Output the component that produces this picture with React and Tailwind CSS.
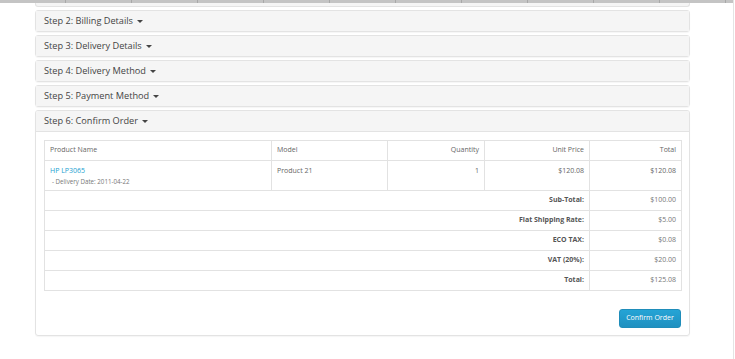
const steps = ["Step 2: Billing Details", "Step 3: Delivery Details", "Step 4: Delivery Method", "Step 5: Payment Method"];

const totals = [
  ["Sub-Total:", "$100.00"],
  ["Flat Shipping Rate:", "$5.00"],
  ["ECO TAX:", "$0.08"],
  ["VAT (20%):", "$20.00"],
  ["Total:", "$125.08"],
];

function Caret() {
  return <span className="ml-[4px] inline-block h-0 w-0 border-x-[3px] border-t-[3px] border-x-transparent border-t-[#444] align-middle" />;
}

function Heading({ title }) {
  return (
    <div className="flex h-[20px] items-center bg-[#f5f5f5] px-[8px] text-[9.2px] text-[#444]">
      {title}
      <Caret />
    </div>
  );
}

export default function App() {
  return (
    <div className="flex h-[359px] w-[735px] overflow-hidden bg-white font-['Open_Sans',sans-serif]">
      <div className="flex w-[733px] flex-col">
        <div className="flex h-[3px] w-full bg-[#c4c4c4]">
          {[...Array(11)].map((_, i) => (
            <div key={i} className="h-full w-[66px] border-r border-[#a8a8a8]" />
          ))}
        </div>
        <div className="flex flex-col gap-[3px] pl-[35px] pr-[43px]">
          <div className="h-[4px] rounded-b-[3px] border-x border-b border-[#e3e3e3] bg-[#f5f5f5]" />
          {steps.map((s) => (
            <div key={s} className="rounded-[3px] border border-[#e3e3e3] shadow-[0_1px_1px_rgba(0,0,0,0.04)]">
              <Heading title={s} />
            </div>
          ))}
          <div className="overflow-hidden rounded-[3px] border border-[#e3e3e3] shadow-[0_1px_1px_rgba(0,0,0,0.04)]">
            <div className="border-b border-[#e3e3e3]">
              <Heading title="Step 6: Confirm Order" />
            </div>
            <div className="px-[8px] pt-[8px] pb-[7px] text-[7px] text-[#666]">
              <table className="w-[637px] table-fixed border-collapse border border-[#e2e2e2]">
                <colgroup>
                  <col className="w-[227px]" />
                  <col className="w-[116px]" />
                  <col className="w-[97px]" />
                  <col className="w-[105px]" />
                  <col className="w-[92px]" />
                </colgroup>
                <thead>
                  <tr className="h-[20px]">
                    <td className="border border-[#e2e2e2] px-[5px]">Product Name</td>
                    <td className="border border-[#e2e2e2] px-[5px]">Model</td>
                    <td className="border border-[#e2e2e2] px-[5px] text-right">Quantity</td>
                    <td className="border border-[#e2e2e2] px-[5px] text-right">Unit Price</td>
                    <td className="border border-[#e2e2e2] px-[5px] text-right">Total</td>
                  </tr>
                </thead>
                <tbody>
                  <tr className="h-[30px] align-top">
                    <td className="border border-[#e2e2e2] px-[5px] pt-[5px]">
                      <div className="text-[#23a1d1]">HP LP3065</div>
                      <div className="pl-[2px] text-[6.2px] text-[#777]">- Delivery Date: 2011-04-22</div>
                    </td>
                    <td className="border border-[#e2e2e2] px-[5px] pt-[5px]">Product 21</td>
                    <td className="border border-[#e2e2e2] px-[5px] pt-[5px] text-right">1</td>
                    <td className="border border-[#e2e2e2] px-[5px] pt-[5px] text-right">$120.08</td>
                    <td className="border border-[#e2e2e2] px-[5px] pt-[5px] text-right">$120.08</td>
                  </tr>
                  {totals.map(([label, value]) => (
                    <tr key={label} className="h-[20px]">
                      <td colSpan={4} className="border border-[#e2e2e2] px-[5px] text-right font-bold text-[#555]">{label}</td>
                      <td className="border border-[#e2e2e2] px-[5px] text-right text-[#777]">{value}</td>
                    </tr>
                  ))}
                </tbody>
              </table>
              <div className="mt-[18px] flex justify-end">
                <button className="h-[19px] w-[62px] rounded-[3px] border border-[#1f8dba] bg-gradient-to-b from-[#25a4d6] to-[#1f90c0] text-[7px] text-white">
                  Confirm Order
                </button>
              </div>
            </div>
          </div>
        </div>
      </div>
      <div className="h-full w-px bg-[#e4e4e4]" />
    </div>
  );
}
